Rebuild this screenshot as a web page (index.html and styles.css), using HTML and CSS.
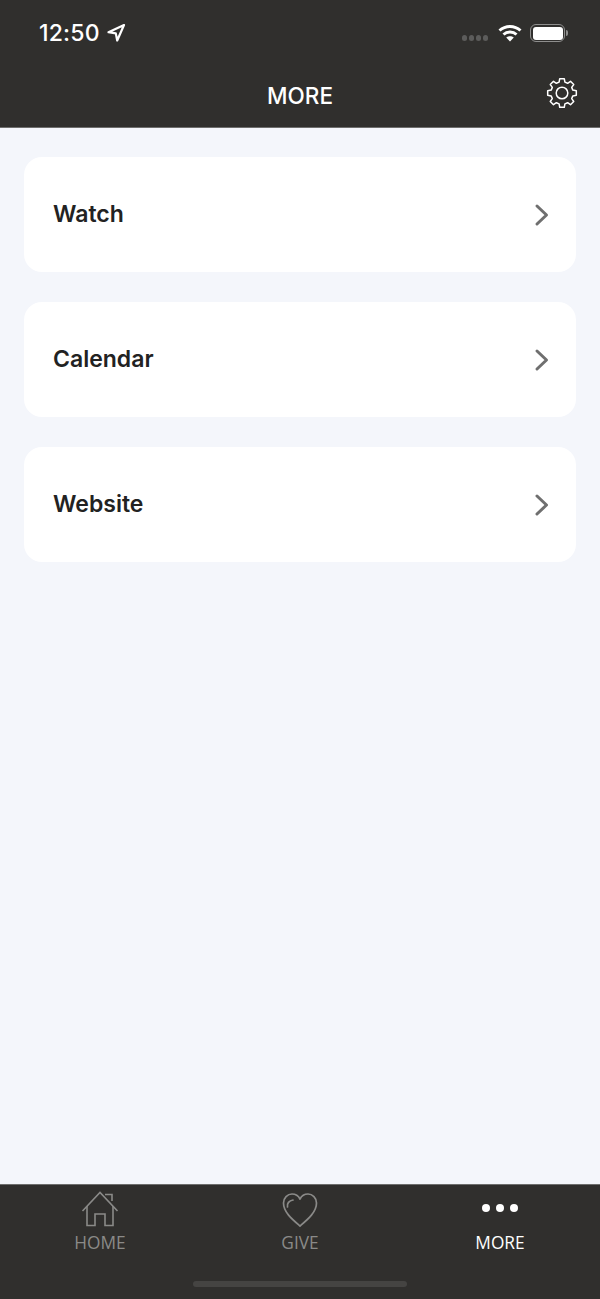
FILE: index.html
```html
<!DOCTYPE html>
<html lang="en">
<head>
    <meta charset="UTF-8">
    <meta name="viewport" content="width=device-width, initial-scale=1.0">
    <title>More</title>
    <link rel="stylesheet" href="styles.css">
</head>
<body>
    <div class="app">
        <header class="header">
            <div class="status-bar">
                <div class="status-left">
                    <span class="time">12:50</span>
                    <svg class="location" width="20" height="20" viewBox="0 0 20 20">
                        <path d="M18 2 2.500 9.200 9.800 10.400 11.200 17.500Z" fill="none" stroke="#fff" stroke-width="2.200" stroke-linejoin="round"/>
                    </svg>
                </div>
                <div class="status-right">
                    <div class="signal">
                        <span></span><span></span><span></span><span></span>
                    </div>
                    <svg class="wifi" width="24" height="18" viewBox="0 0 24 18">
                        <path d="M1.500 6.500C7.500 1 16.500 1 22.500 6.500" fill="none" stroke="#fff" stroke-width="3"/>
                        <path d="M5.500 10.500C9 7.300 15 7.300 18.500 10.500" fill="none" stroke="#fff" stroke-width="3"/>
                        <path d="M8.200 13.600C10.400 11.800 13.600 11.800 15.800 13.600L12 17.500Z" fill="#fff"/>
                    </svg>
                    <div class="battery">
                        <div class="battery-fill"></div>
                    </div>
                    <div class="battery-cap"></div>
                </div>
            </div>
            <div class="nav-bar">
                <h1 class="nav-title">MORE</h1>
                <svg class="settings" width="32" height="32" viewBox="0 0 32 32">
                    <path d="M13.100 5.180 13.730 1.680H18.270L18.900 5.180 21.600 6.300 24.520 4.270 27.730 7.480 25.700 10.400 26.820 13.100 30.320 13.730V18.270L26.820 18.900 25.700 21.600 27.730 24.520 24.520 27.730 21.600 25.700 18.900 26.820 18.270 30.320H13.730L13.100 26.820 10.400 25.700 7.480 27.730 4.270 24.520 6.300 21.600 5.180 18.900 1.680 18.270V13.730L5.180 13.100 6.300 10.400 4.270 7.480 7.480 4.270 10.400 6.300Z" fill="none" stroke="#fff" stroke-width="1.500" stroke-linejoin="round"/>
                    <circle cx="16" cy="16" r="5.800" fill="none" stroke="#fff" stroke-width="1.500"/>
                </svg>
            </div>
        </header>

        <main class="list">
            <a class="card" href="#">
                <span class="card-label">Watch</span>
                <svg class="chevron" width="16" height="24" viewBox="0 0 16 24">
                    <path d="M3 3 12.500 12 3 21" fill="none" stroke="#6f6f6f" stroke-width="3" stroke-linecap="round" stroke-linejoin="round"/>
                </svg>
            </a>
            <a class="card" href="#">
                <span class="card-label">Calendar</span>
                <svg class="chevron" width="16" height="24" viewBox="0 0 16 24">
                    <path d="M3 3 12.500 12 3 21" fill="none" stroke="#6f6f6f" stroke-width="3" stroke-linecap="round" stroke-linejoin="round"/>
                </svg>
            </a>
            <a class="card" href="#">
                <span class="card-label">Website</span>
                <svg class="chevron" width="16" height="24" viewBox="0 0 16 24">
                    <path d="M3 3 12.500 12 3 21" fill="none" stroke="#6f6f6f" stroke-width="3" stroke-linecap="round" stroke-linejoin="round"/>
                </svg>
            </a>
        </main>

        <nav class="tab-bar">
            <div class="tabs">
                <a class="tab" href="#">
                    <svg class="tab-icon" width="38" height="36" viewBox="0 0 38 36">
                        <path d="M1.500 20 19 1.500 36.500 20" fill="none" stroke="#8a8a88" stroke-width="1.600"/>
                        <path d="M24 3.500H31V10" fill="none" stroke="#8a8a88" stroke-width="1.600"/>
                        <path d="M6 15V34.500H14V23H24V34.500H32V15" fill="none" stroke="#8a8a88" stroke-width="1.600"/>
                    </svg>
                    <span>HOME</span>
                </a>
                <a class="tab" href="#">
                    <svg class="tab-icon" width="38" height="36" viewBox="0 0 38 36">
                        <path d="M19 35C12 29 2.500 21.500 2.500 12 2.500 7 6.500 3 11 3 14.500 3 17.500 5 19 8 20.500 5 23.500 3 27 3 31.500 3 35.500 7 35.500 12 35.500 21.500 26 29 19 35Z" fill="none" stroke="#8a8a88" stroke-width="1.700" stroke-linejoin="round"/>
                        <path d="M6.500 16C5.800 12.500 8 9.500 12 9" fill="none" stroke="#8a8a88" stroke-width="1.700" stroke-linecap="round"/>
                    </svg>
                    <span>GIVE</span>
                </a>
                <a class="tab tab-active" href="#">
                    <div class="dots">
                        <i></i><i></i><i></i>
                    </div>
                    <span>MORE</span>
                </a>
            </div>
            <div class="home-indicator"></div>
        </nav>
    </div>
</body>
</html>
```

FILE: styles.css
```css
* {
    margin: 0;
    padding: 0;
    box-sizing: border-box;
}

body {
    font-family: 'Inter', sans-serif;
    background: #f4f6fb;
}

a {
    text-decoration: none;
    color: inherit;
}

.app {
    height: 1299px;
    display: flex;
    flex-direction: column;
}

/* Header */
.header {
    height: 128px;
    background: #302f2d;
    border-bottom: 1px solid #6e6e6d;
    color: #fff;
}

.status-bar {
    height: 66px;
    display: flex;
    justify-content: space-between;
    align-items: center;
    padding: 0 32px 0 39px;
}

.status-left {
    display: flex;
    align-items: center;
    gap: 6px;
}

.time {
    font-size: 23px;
    font-weight: 500;
    letter-spacing: 0.200px;
}

.status-right {
    display: flex;
    align-items: center;
}

.signal {
    display: flex;
    gap: 1.500px;
    margin-top: 10px;
    margin-right: 10px;
}

.signal span {
    width: 5.500px;
    height: 5.500px;
    border-radius: 50%;
    background: #5c5c5b;
}

.wifi {
    margin-right: 8px;
}

.battery {
    width: 35px;
    height: 18px;
    padding: 1.500px;
    border: 1.500px solid #8e8e8d;
    border-radius: 6px;
}

.battery-fill {
    height: 100%;
    background: #fff;
    border-radius: 3px;
}

.battery-cap {
    width: 2px;
    height: 6px;
    margin-left: 1px;
    background: #8d8d8c;
    border-radius: 0 2px 2px 0;
}

.nav-bar {
    height: 61px;
    position: relative;
    display: flex;
    justify-content: center;
    align-items: center;
    padding-bottom: 2px;
}

.nav-title {
    font-size: 22.500px;
    font-weight: 500;
}

.settings {
    position: absolute;
    right: 22px;
    top: 11px;
}

/* List */
.list {
    flex: 1;
    display: flex;
    flex-direction: column;
    gap: 30px;
    padding: 29px 24px 0;
}

.card {
    height: 115px;
    display: flex;
    justify-content: space-between;
    align-items: center;
    padding: 0 26px 0 29px;
    background: #fff;
    border-radius: 18px;
}

.card-label {
    font-size: 23px;
    font-weight: 600;
    color: #222222;
    margin-bottom: 2px;
}

/* Tab bar */
.tab-bar {
    height: 115px;
    background: #302f2d;
    border-top: 1px solid #6e6e6d;
    display: flex;
    flex-direction: column;
}

.tabs {
    display: flex;
}

.tab {
    flex: 1;
    height: 81px;
    display: flex;
    flex-direction: column;
    align-items: center;
    padding-top: 6px;
    font-family: 'Open Sans', sans-serif;
    font-size: 17.300px;
    color: #8a8a88;
}

.tab-icon {
    display: block;
    margin-bottom: 4px;
}

.tab-active {
    color: #fff;
}

.dots {
    height: 36px;
    display: flex;
    justify-content: center;
    align-items: center;
    gap: 6px;
    margin-bottom: 4px;
    padding-bottom: 2px;
}

.dots i {
    width: 8px;
    height: 8px;
    border-radius: 50%;
    background: #fff;
}

.home-indicator {
    width: 214px;
    height: 6px;
    margin: 15px auto 0;
    border-radius: 4px;
    background: #454442;
}
```
